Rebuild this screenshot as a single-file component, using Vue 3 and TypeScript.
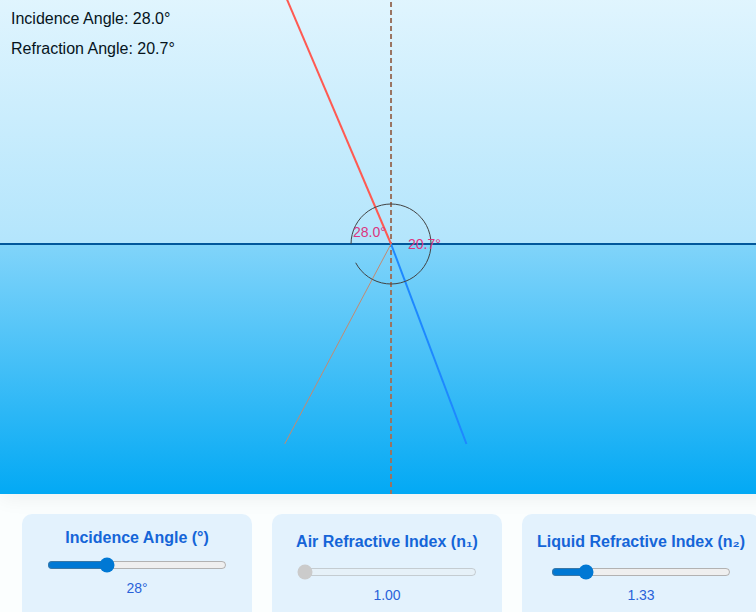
<script setup lang="ts">
import { computed, ref } from 'vue'

const incidence = ref(28)
const airIndex = ref(1)
const liquidIndex = ref(1.33)

const reach = 200
const top = 250
const radius = 40

const incidenceRad = computed(() => (incidence.value * Math.PI) / 180)
const refractionRad = computed(() =>
  Math.asin((airIndex.value * Math.sin(incidenceRad.value)) / liquidIndex.value),
)
const refraction = computed(() => (refractionRad.value * 180) / Math.PI)
const spread = computed(() => reach * Math.tan(incidenceRad.value))
const bend = computed(() => reach * Math.tan(refractionRad.value))
const incidenceLabel = computed(() => `${incidence.value.toFixed(1)}°`)
const refractionLabel = computed(() => `${refraction.value.toFixed(1)}°`)
const arc = computed(() => {
  const x = -radius * Math.cos(incidenceRad.value)
  const y = radius * Math.sin(incidenceRad.value)
  return `M ${-radius} 0 A ${radius} ${radius} 0 1 1 ${x} ${y}`
})
</script>

<template>
  <main class="page">
    <svg class="scene" role="img" aria-label="Refraction diagram">
      <defs>
        <linearGradient id="air" x1="0" y1="0" x2="0" y2="1">
          <stop offset="0" stop-color="#e1f5fe" />
          <stop offset="1" stop-color="#b3e5fc" />
        </linearGradient>
        <linearGradient id="liquid" x1="0" y1="0" x2="0" y2="1">
          <stop offset="0" stop-color="#81d4fa" />
          <stop offset="1" stop-color="#03a9f4" />
        </linearGradient>
      </defs>
      <rect x="0" y="-6" width="100%" height="250" fill="url(#air)" />
      <rect x="0" y="244" width="100%" height="250" fill="url(#liquid)" />
      <line class="surface" x1="0" y1="244" x2="100%" y2="244" />
      <svg class="origin" x="50%" y="244">
        <line class="normal" x1="0" :y1="-top" x2="0" :y2="top" />
        <line class="ray incident" :x1="-spread" :y1="-top" x2="0" y2="0" />
        <line class="ray refracted" x1="0" y1="0" :x2="bend" :y2="reach" />
        <line class="ray reflected" x1="0" y1="0" :x2="-spread" :y2="reach" />
        <path class="arc" :d="arc" />
        <text class="angle" x="-38" y="-7">{{ incidenceLabel }}</text>
        <text class="angle" x="17" y="5">{{ refractionLabel }}</text>
      </svg>
      <text class="readout" x="11" y="24">Incidence Angle: {{ incidenceLabel }}</text>
      <text class="readout" x="11" y="54">Refraction Angle: {{ refractionLabel }}</text>
    </svg>

    <section class="controls">
      <div class="card">
        <label class="title" for="incidence">Incidence Angle (°)</label>
        <input id="incidence" v-model.number="incidence" class="slider" type="range" min="0" max="89" />
        <output class="value" for="incidence">{{ incidence }}°</output>
      </div>
      <div class="card">
        <label class="title indexed" for="air-index">Air Refractive Index (n₁)</label>
        <input id="air-index" v-model.number="airIndex" class="slider" type="range" min="1" max="2" step="0.01" disabled />
        <output class="value" for="air-index">{{ airIndex.toFixed(2) }}</output>
      </div>
      <div class="card">
        <label class="title indexed" for="liquid-index">Liquid Refractive Index (n₂)</label>
        <input id="liquid-index" v-model.number="liquidIndex" class="slider" type="range" min="1.1" max="2.5" step="0.01" />
        <output class="value" for="liquid-index">{{ liquidIndex.toFixed(2) }}</output>
      </div>
    </section>
  </main>
</template>

<style>
body {
  overflow-x: hidden;
  background: #fbfefe;
}
</style>

<style scoped>
.page {
  display: flex;
  flex-direction: column;
  width: max-content;
  min-width: 100%;
  min-height: 100vh;
  font-family: Arial, "Liberation Sans", sans-serif;
}

.scene {
  display: block;
  flex: none;
  width: 100%;
  height: 494px;
  box-shadow: 0 4px 20px rgba(0, 0, 0, 0.06);
}

.origin {
  overflow: visible;
}

.surface {
  stroke: #01579b;
  stroke-width: 2;
}

.normal {
  stroke: #9a7462;
  stroke-width: 2;
  stroke-dasharray: 5 3;
}

.ray {
  stroke-width: 2;
}

.incident {
  stroke: #ff5a52;
}

.refracted {
  stroke: #1e88ff;
}

.reflected {
  stroke: #c48a70;
  stroke-width: 1;
}

.arc {
  fill: none;
  stroke: #424242;
  stroke-width: 1;
}

.angle {
  fill: #dc3580;
  font-size: 14px;
}

.readout {
  fill: #06141c;
  font-size: 16px;
}

.controls {
  display: flex;
  flex: 1;
  gap: 20px;
  padding: 20px 22px 0;
}

.card {
  display: flex;
  flex-direction: column;
  align-items: center;
  box-sizing: border-box;
  min-width: 230px;
  padding: 15px 15px 0;
  border-radius: 10px 10px 0 0;
  background: #e3f2fd;
  color: #2962d9;
}

.title {
  color: #1565d8;
  font-size: 16px;
  font-weight: bold;
  line-height: 18px;
  white-space: nowrap;
}

.indexed {
  line-height: 25px;
}

.slider {
  width: 180px;
  height: 16px;
  margin: 10px 0 6px;
  accent-color: #0078d4;
}

.value {
  font-size: 14px;
  line-height: 18px;
}
</style>
